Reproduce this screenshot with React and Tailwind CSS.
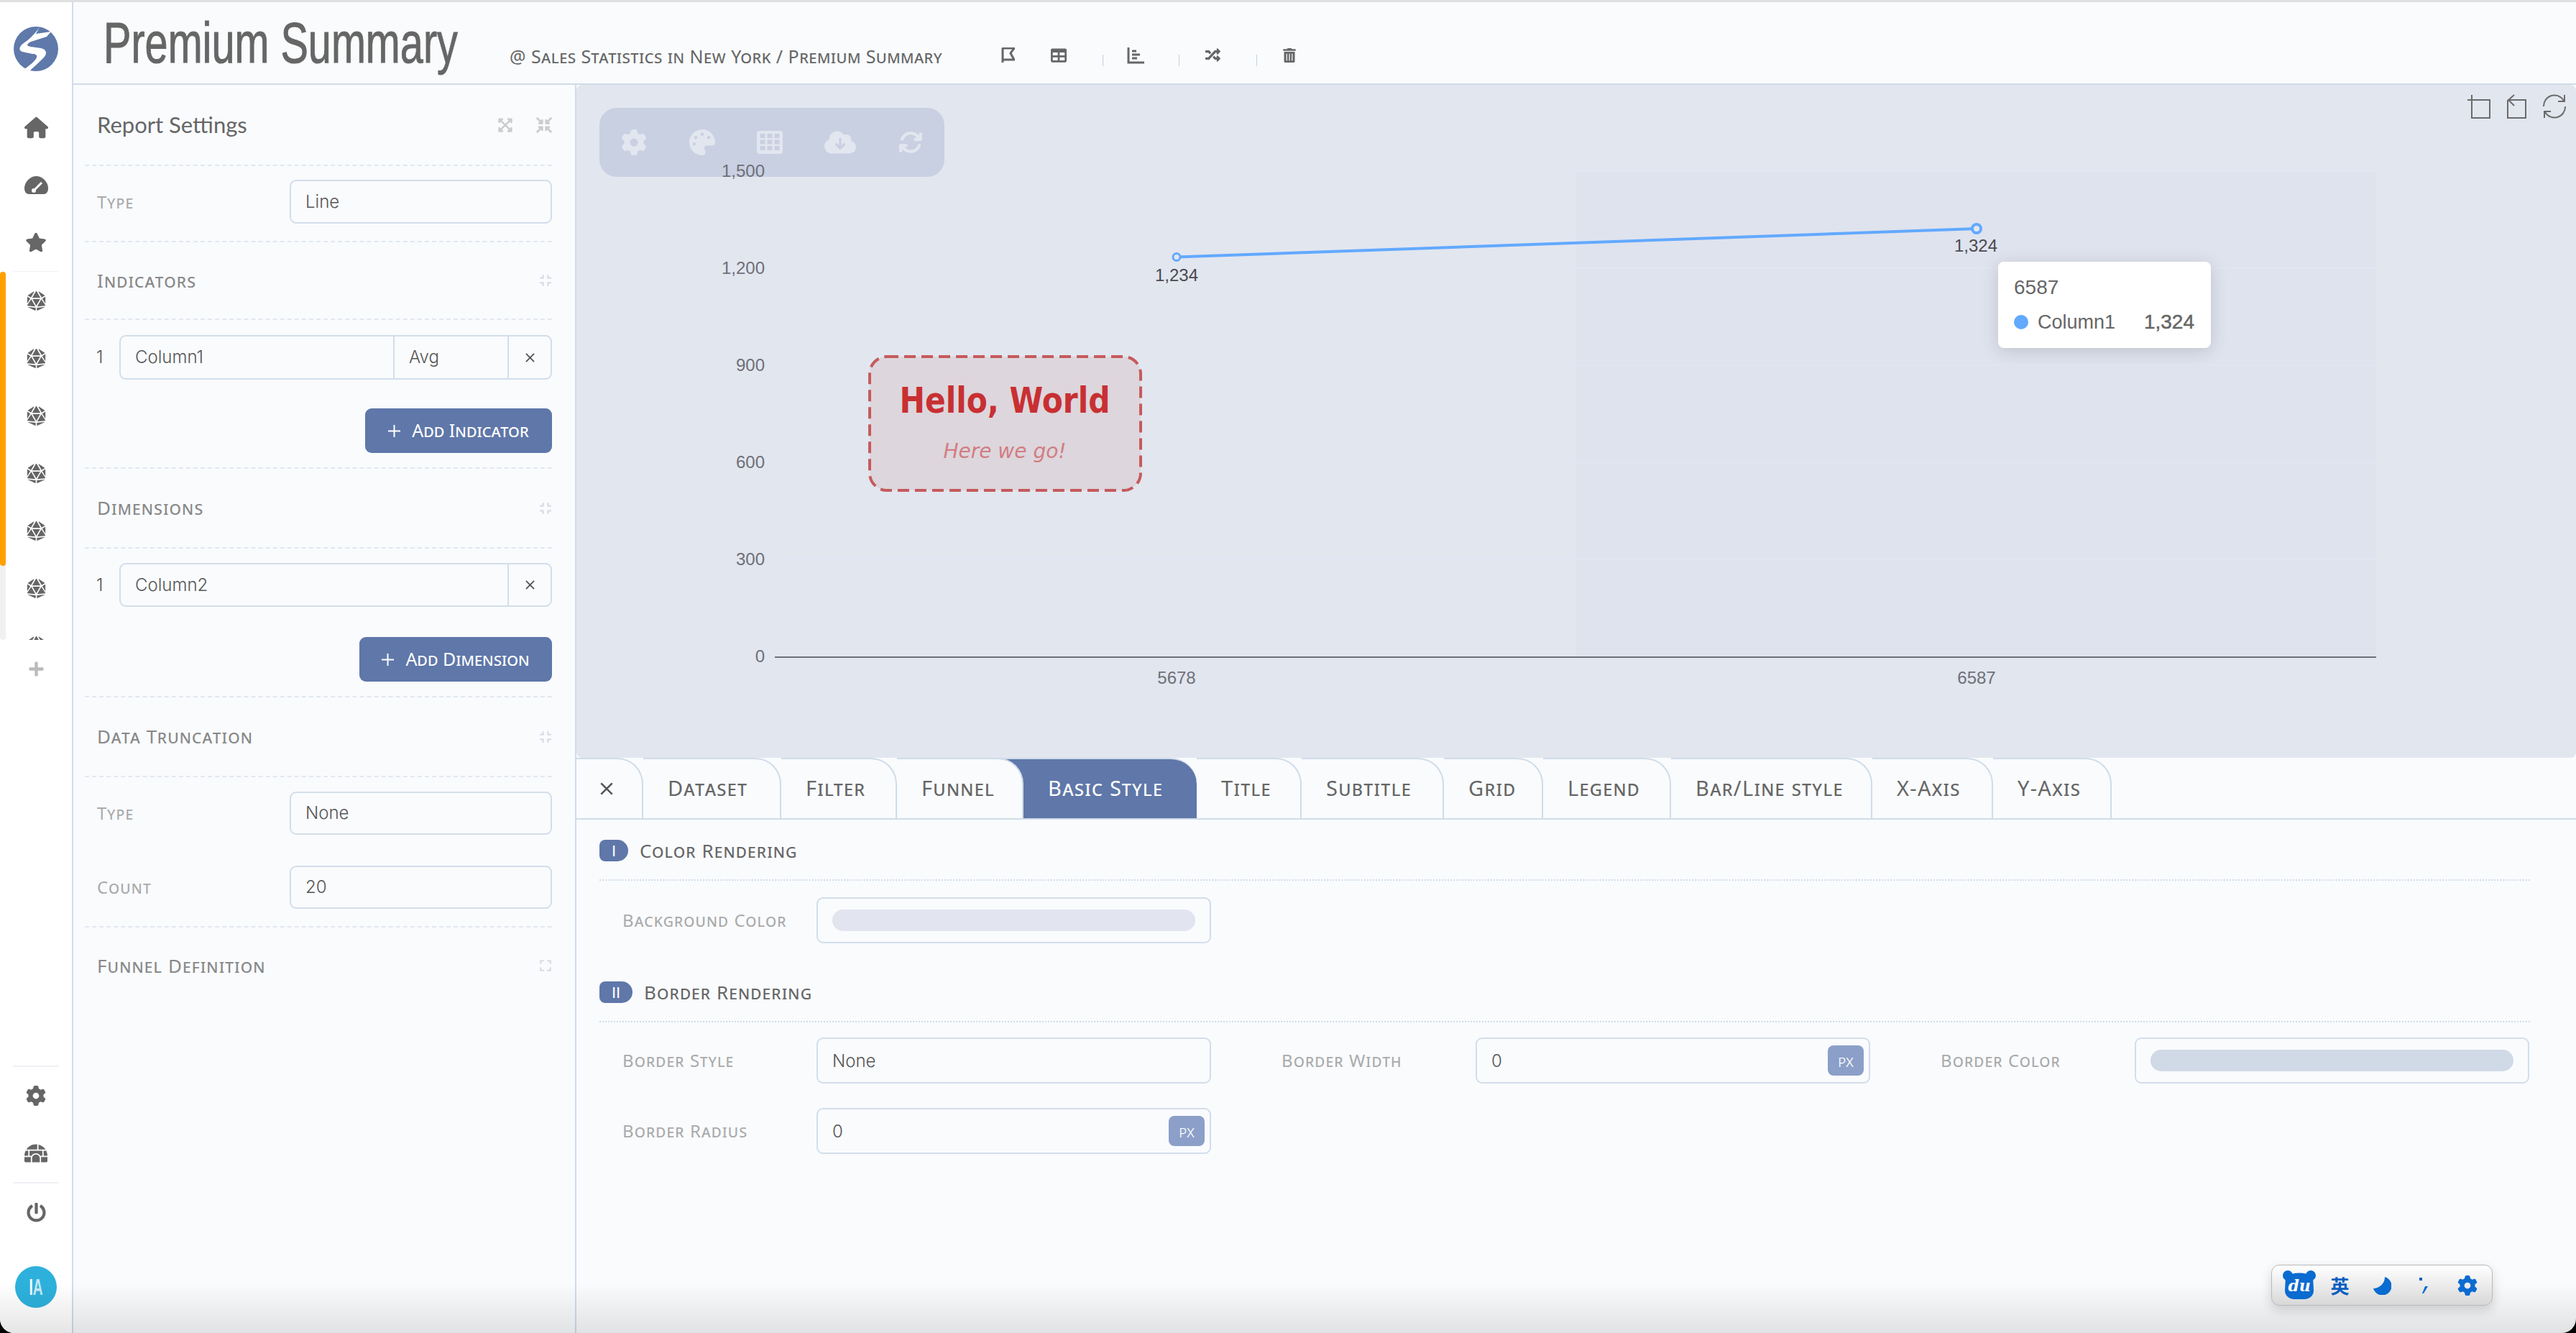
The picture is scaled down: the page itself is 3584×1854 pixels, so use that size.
import React from "react";
import {
  FaDiceD20, FaPlus, FaIgloo, FaPowerOff,
  FaExpandArrowsAlt, FaCompressArrowsAlt, FaCompress, FaExpand,
  FaTable, FaRandom, FaTrashAlt,
} from "react-icons/fa";
import { FaHouse, FaStar, FaGear, FaPalette, FaCloudArrowDown, FaArrowsRotate } from "react-icons/fa6";

const SC = "[font-variant-caps:small-caps] font-['Noto_Sans',sans-serif]";
const BODY = "font-['Inter',sans-serif]";

function X({ size = 14, w = 2.5 }) {
  return (
    <svg width={size} height={size} viewBox="0 0 14 14">
      <path d="M1 1 L13 13 M13 1 L1 13" stroke="#555555" strokeWidth={w} fill="none" />
    </svg>
  );
}

function NavItem({ children, className = "" }) {
  return <div className={`h-[80px] flex items-center justify-center text-[#666666] shrink-0 ${className}`}>{children}</div>;
}

function Sidebar() {
  return (
    <div className="w-[102px] shrink-0 border-r-2 border-[#d0dce8] bg-white flex flex-col">
      <div className="h-[134px] flex justify-center pt-[34px] shrink-0">
        <svg width="62" height="62" viewBox="0 0 62 62">
          <circle cx="31" cy="31" r="31" fill="#5f79ab" />
          <path d="M36 1 L31 10 L52 7 L46 14 L24 21 C18 24 17 27 24 28 L38 30 C47 32 47 39 40 45 C35 50 28 56 22 62 L14 60 C22 54 30 48 32 43 C33 40 31 38 26 38 L12 35 C6 33 8 27 14 23 C20 19 28 12 36 1 Z" fill="#ffffff" />
        </svg>
      </div>
      <NavItem><FaHouse size={33} /></NavItem>
      <NavItem>
        <svg width="33" height="25" viewBox="0 0 33 25">
          <path d="M6 25 C2 25 0 21 0 17 C0 8 8 0 16.5 0 C25 0 33 8 33 17 C33 21 31 25 27 25 Z" fill="#666666" />
          <path d="M13 20 L24 9" stroke="#ffffff" strokeWidth="3" />
          <circle cx="13" cy="20" r="3" fill="#ffffff" />
        </svg>
      </NavItem>
      <NavItem><FaStar size={30} /></NavItem>
      <div className="mx-[18px] border-b border-[#eef0f5]" />
      <div className="relative h-[512px] overflow-hidden shrink-0">
        <div className="absolute left-0 top-0 w-[8px] h-full rounded-[4px] bg-[#f0f1f3]" />
        <div className="absolute left-0 top-0 w-[8px] h-[409px] rounded-[4px] bg-[#ff9f00]" />
        {[0, 1, 2, 3, 4, 5, 6].map((i) => (
          <NavItem key={i}><FaDiceD20 size={27} /></NavItem>
        ))}
      </div>
      <div className="h-[80px] flex items-center justify-center text-[#bbbbbb] shrink-0"><FaPlus size={23} /></div>
      <div className="mt-auto mx-[18px] border-b-2 border-[#eef0f5]" />
      <NavItem><FaGear size={28} /></NavItem>
      <NavItem><FaIgloo size={32} /></NavItem>
      <div className="mx-[18px] border-b-2 border-[#eef0f5]" />
      <NavItem className="mb-[24px]"><FaPowerOff size={27} /></NavItem>
      <div className="h-[80px] mb-[24px] flex items-center justify-center shrink-0">
        <div className="w-[58px] h-[58px] rounded-full bg-[#2db1dc] flex items-center justify-center font-['Liberation_Sans',sans-serif] font-bold text-[32px] leading-none">
          <span className="scale-x-[0.6] flex">
            <span className="text-white">I</span>
            <span className="text-[#c5e8f6]">A</span>
          </span>
        </div>
      </div>
    </div>
  );
}

function Header() {
  return (
    <div className="h-[115px] shrink-0 border-b-2 border-[#d0dce8] flex items-center pl-[42px] relative">
      <div className="w-[565px] shrink-0 h-full flex items-center">
        <span className="inline-block origin-left scale-x-[0.72] font-['Liberation_Sans',sans-serif] [-webkit-text-stroke:1px_#666666] text-[#666666] text-[80px] leading-none whitespace-nowrap">Premium Summary</span>
      </div>
      <div className={`w-[683px] shrink-0 pt-[38px] ${SC} text-[25px] tracking-[0.45px] text-[#666666] whitespace-nowrap`}>@ Sales Statistics in New York / Premium Summary</div>
      <div className="flex items-center text-[#666666] pt-[34px]">
        <svg width="20" height="22" viewBox="0 0 20 22"><path d="M2 1 H19 L14 8 L19 17 H4 M3 1 V21" fill="none" stroke="#666666" strokeWidth="3" /></svg>
        <FaTable size={22} className="ml-[50px]" />
        <div className="ml-[50px] w-[1px] h-[16px] mt-[14px] bg-[#c5d0dd]" />
        <svg width="24" height="24" viewBox="0 0 24 24" className="ml-[33px]"><path d="M2 1 V22 H24 M7 6 H13 M7 11 H18 M7 16 H14" fill="none" stroke="#666666" strokeWidth="3" /></svg>
        <div className="ml-[48px] w-[1px] h-[16px] mt-[14px] bg-[#c5d0dd]" />
        <FaRandom size={21} className="ml-[36px]" />
        <div className="ml-[50px] w-[1px] h-[16px] mt-[14px] bg-[#c5d0dd]" />
        <FaTrashAlt size={20} className="ml-[35px]" />
      </div>
    </div>
  );
}

function SectionTitle({ title, expand, className = "" }) {
  return (
    <div className={`flex items-center justify-between pl-[17px] ${className}`}>
      <span className={`${SC} text-[26px] tracking-[1.1px] text-[#888888]`}>{title}</span>
      {expand ? <FaExpand size={18} className="text-[#d8dde5]" /> : <FaCompress size={18} className="text-[#d8dde5]" />}
    </div>
  );
}

function LabeledInput({ label, value, className = "" }) {
  return (
    <div className={`flex items-center ${className}`}>
      <span className={`w-[285px] pl-[17px] shrink-0 ${SC} text-[24px] tracking-[1.2px] text-[#aaaaaa]`}>{label}</span>
      <div className={`flex-1 h-full border-2 border-[#d3deea] rounded-[9px] flex items-center pl-[20px] ${BODY} text-[24px] font-light text-[#555555]`}>{value}</div>
    </div>
  );
}

function AddButton({ label, width, className = "" }) {
  return (
    <div className={`ml-auto h-[62px] rounded-[9px] bg-[#5f77a9] text-white flex items-center justify-center gap-[16px] ${width} ${className}`}>
      <svg width="17" height="17" viewBox="0 0 17 17"><path d="M8.5 0 V17 M0 8.5 H17" stroke="#ffffff" strokeWidth="2" /></svg>
      <span className={`${SC} text-[25px]`}>{label}</span>
    </div>
  );
}

function Cell({ children, className = "" }) {
  return <div className={`flex items-center pl-[20px] ${BODY} text-[24px] font-light text-[#555555] ${className}`}>{children}</div>;
}

function XCell() {
  return <div className="w-[60px] flex items-center justify-center border-l-2 border-[#d3deea] shrink-0"><X size={13} w={2} /></div>;
}

function Panel() {
  return (
    <div className="w-[700px] shrink-0 border-r-2 border-[#d0dce8] pl-[16px] pr-[32px] overflow-hidden">
      <div className="h-[113px] flex items-center justify-between pl-[17px] border-b-2 border-dashed border-[#e2e8f0]">
        <span className="font-['Lato',sans-serif] text-[31px] text-[#666666]">Report Settings</span>
        <div className="flex items-center gap-[32px] text-[#cccccc]">
          <FaExpandArrowsAlt size={22} />
          <FaCompressArrowsAlt size={22} />
        </div>
      </div>
      <LabeledInput label="Type" value="Line" className="h-[61px] mt-[19px]" />
      <div className="mt-[24px] border-b-2 border-dashed border-[#e2e8f0]" />
      <SectionTitle title="Indicators" className="h-[106px]" />
      <div className="border-b-2 border-dashed border-[#e2e8f0]" />
      <div className="flex items-center h-[62px] mt-[21px]">
        <span className={`w-[48px] pl-[16px] shrink-0 ${BODY} text-[24px] font-light text-[#555555]`}>1</span>
        <div className="flex-1 h-full flex border-2 border-[#d3deea] rounded-[9px]">
          <Cell className="w-[379px] shrink-0">Column1</Cell>
          <Cell className="flex-1 border-l-2 border-[#d3deea]">Avg</Cell>
          <XCell />
        </div>
      </div>
      <AddButton label="Add Indicator" width="w-[260px]" className="mt-[40px]" />
      <div className="mt-[20px] border-b-2 border-dashed border-[#e2e8f0]" />
      <SectionTitle title="Dimensions" className="h-[109px]" />
      <div className="border-b-2 border-dashed border-[#e2e8f0]" />
      <div className="flex items-center h-[61px] mt-[20px]">
        <span className={`w-[48px] pl-[16px] shrink-0 ${BODY} text-[24px] font-light text-[#555555]`}>1</span>
        <div className="flex-1 h-full flex border-2 border-[#d3deea] rounded-[9px]">
          <Cell className="flex-1">Column2</Cell>
          <XCell />
        </div>
      </div>
      <AddButton label="Add Dimension" width="w-[268px]" className="mt-[42px]" />
      <div className="mt-[20px] border-b-2 border-dashed border-[#e2e8f0]" />
      <SectionTitle title="Data Truncation" className="h-[109px]" />
      <div className="border-b-2 border-dashed border-[#e2e8f0]" />
      <LabeledInput label="Type" value="None" className="h-[60px] mt-[20px]" />
      <LabeledInput label="Count" value="20" className="h-[60px] mt-[43px]" />
      <div className="mt-[24px] border-b-2 border-dashed border-[#e2e8f0]" />
      <SectionTitle title="Funnel Definition" expand className="h-[106px]" />
    </div>
  );
}

function Chart() {
  const yTicks = [[1200, "1,200"], [900, "900"], [600, "600"], [300, "300"], [0, "0"]];
  const y = (v) => 913 - v * 0.45;
  return (
    <div className="relative h-[936px] shrink-0 bg-[#e2e6ef] rounded-[8px] overflow-hidden">
      <svg className="block" width="2782" height="936" viewBox="802 118 2782 936" fontFamily="'Liberation Sans', sans-serif">
        <rect x="2192" y="238" width="1114" height="675" fill="#dfe3ee" />
        {[1500, 1200, 900, 600, 300].map((v) => (
          <line key={v} x1="1078" x2="3306" y1={y(v)} y2={y(v)} stroke="#e0e6f1" strokeWidth="2" />
        ))}
        <line x1="1078" x2="3306" y1="914" y2="914" stroke="#6e7079" strokeWidth="2" />
        {yTicks.map(([v, t]) => (
          <text key={v} x="1064" y={y(v) + 8} textAnchor="end" fontSize="24" fill="#6e7079">{t}</text>
        ))}
        <text x="1637" y="951" textAnchor="middle" fontSize="24" fill="#6e7079">5678</text>
        <text x="2750" y="951" textAnchor="middle" fontSize="24" fill="#6e7079">6587</text>
        <line x1="1637" y1="357.5" x2="2750" y2="318" stroke="#62a9ff" strokeWidth="4" />
        <circle cx="1637" cy="357.5" r="5" fill="#e2e6ef" stroke="#62a9ff" strokeWidth="3" />
        <circle cx="2750" cy="318" r="6" fill="#e2e6ef" stroke="#62a9ff" strokeWidth="4" />
        <text x="1637" y="391" textAnchor="middle" fontSize="24" fill="#4a4a4f">1,234</text>
        <text x="2749" y="350" textAnchor="middle" fontSize="24" fill="#4a4a4f">1,324</text>
        <rect x="1210" y="496" width="377" height="186" rx="24" fill="#ddd6dc" stroke="#c55a5c" strokeWidth="4" strokeDasharray="16 8" />
        <text x="1398" y="574" textAnchor="middle" fontSize="49" fontWeight="700" textLength="293" lengthAdjust="spacingAndGlyphs" fontFamily="'DejaVu Sans', sans-serif" fill="#c83032">Hello, World</text>
        <text x="1398" y="637" textAnchor="middle" fontSize="28" fontStyle="italic" fontFamily="'DejaVu Sans', sans-serif" fill="#d17d82">Here we go!</text>
        <g fill="none" stroke="#6b6b6b" strokeWidth="2">
          <path d="M3433 139 H3447 M3439 132 V164 H3464 V139 H3447" />
          <path d="M3489 139 V164 H3514 V139 H3490 M3498 132 L3490 139 L3498 147" />
          <path d="M3539 148 A15 15 0 0 1 3567 140 M3569 148 A15 15 0 0 1 3541 156 M3568 132 V141 H3559 M3540 164 V155 H3549" />
        </g>
      </svg>
      <div className="absolute left-[32px] top-[32px] w-[480px] h-[96px] rounded-[24px] bg-[#c9d0e2] text-[#e2e6ef]">
        <div className="flex h-full items-center justify-around px-[1px]">
          <FaGear size={36} />
          <FaPalette size={36} />
          <svg width="36" height="32" viewBox="0 0 36 32">
            <rect width="36" height="32" rx="4" fill="#e2e6ef" />
            {[4.5, 14.5, 24.5].map((x) => [4, 12.5, 21].map((yy) => (
              <rect key={`${x}-${yy}`} x={x} y={yy} width="7" height="6" fill="#c9d0e2" />
            )))}
          </svg>
          <FaCloudArrowDown size={44} />
          <FaArrowsRotate size={34} />
        </div>
        <span className="absolute left-[170px] top-[68px] font-['Liberation_Sans',sans-serif] text-[24px] leading-[40px] text-[#6e7079]">1,500</span>
      </div>
      <div className="absolute left-[1978px] top-[246px] w-[296px] h-[120px] bg-white rounded-[8px] shadow-[0_4px_24px_rgba(0,0,0,0.15)] pl-[22px] pr-[23px] font-['Liberation_Sans',sans-serif] text-[#666666] text-[28px]">
        <div className="h-[30px] mt-[21px] flex items-center">6587</div>
        <div className="mt-[18px] h-[30px] flex items-center">
          <span className="w-[20px] h-[20px] rounded-full bg-[#62a9ff] mr-[13px]" />
          <span className="text-[27px]">Column1</span>
          <span className="ml-auto font-medium [-webkit-text-stroke:0.5px_#666666]">1,324</span>
        </div>
      </div>
    </div>
  );
}

const TABS = [
  ["Dataset", "w-[192px]"], ["Filter", "w-[161px]"], ["Funnel", "w-[176px]"],
  ["Basic Style", "w-[241px]"], ["Title", "w-[146px]"], ["Subtitle", "w-[198px]"],
  ["Grid", "w-[138px]"], ["Legend", "w-[178px]"], ["Bar/Line style", "w-[280px]"],
  ["X-Axis", "w-[168px]"], ["Y-Axis", "w-[165px]"],
];

function Tabs() {
  return (
    <div className="h-[86px] shrink-0 flex border-b-2 border-[#d0dce8]">
      <div className="relative z-10 w-[93px] shrink-0 flex items-center pl-[33px] border-t-2 border-r-2 border-[#d0dce8] rounded-tr-[36px] bg-[#f9fbfd]">
        <X size={18} w={2} />
      </div>
      {TABS.map(([t, w]) => {
        const active = t === "Basic Style";
        if (active) {
          return (
            <div key={t} className={`${w} shrink-0 -ml-[36px] box-content pl-[36px] flex items-center bg-[#5f77a9] rounded-tr-[36px] border-t-2 border-[#d0dce8]`}>
              <span className={`pl-[34px] ${SC} text-[29px] tracking-[1.3px] text-white whitespace-nowrap pb-[2px]`}>{t}</span>
            </div>
          );
        }
        return (
          <div key={t} className={`${w} shrink-0 flex items-center border-t-2 border-r-2 border-[#d0dce8] rounded-tr-[36px] ${t === "Funnel" ? "relative z-10 bg-[#f9fbfd]" : ""}`}>
            <span className={`pl-[34px] ${SC} text-[29px] tracking-[1.3px] text-[#666666] whitespace-nowrap pb-[2px]`}>{t}</span>
          </div>
        );
      })}
    </div>
  );
}

function SectionHead({ num, title, badgeW, className = "" }) {
  return (
    <div className={`flex items-start gap-[16px] h-[57px] border-b-2 border-dotted border-[#d0dce8] ${className}`}>
      <span className={`${badgeW} h-[30px] rounded-l-[8px] rounded-r-[15px] bg-[#5f77a9] text-white flex items-center justify-center font-['Liberation_Sans',sans-serif] text-[22px]`}>{num}</span>
      <span className={`${SC} text-[26px] leading-[30px] tracking-[1.1px] text-[#666666]`}>{title}</span>
    </div>
  );
}

function Field({ label, value, px, pill }) {
  return (
    <div className="flex items-center w-[851px] h-[64px]">
      <span className={`w-[302px] pl-[32px] shrink-0 ${SC} text-[24px] tracking-[1.1px] text-[#aaaaaa] whitespace-nowrap`}>{label}</span>
      <div className={`relative w-[549px] h-full shrink-0 border-2 border-[#d3deea] rounded-[9px] flex items-center ${BODY} text-[24px] font-light text-[#555555]`}>
        {pill ? <div className={`mx-[20px] h-[30px] flex-1 rounded-[15px] ${pill}`} /> : <span className="pl-[20px] pt-[2px]">{value}</span>}
        {px && <span className={`absolute right-[7px] top-[9px] w-[50px] h-[42px] rounded-[8px] bg-[#8c9fc8] text-white flex items-center justify-center ${SC} text-[23px]`}>px</span>}
      </div>
    </div>
  );
}

function Content() {
  return (
    <div className="pl-[32px] pr-[64px] pt-[28px]">
      <SectionHead num="I" title="Color Rendering" badgeW="w-[40px]" />
      <div className="mt-[23px]"><Field label="Background Color" pill="bg-[#e2e5ef]" /></div>
      <SectionHead num="II" title="Border Rendering" badgeW="w-[46px]" className="mt-[53px]" />
      <div className="mt-[21px] flex gap-[66px]">
        <Field label="Border Style" value="None" />
        <Field label="Border Width" value="0" px />
        <Field label="Border Color" pill="bg-[#d0d9e6]" />
      </div>
      <div className="mt-[34px]"><Field label="Border Radius" value="0" px /></div>
    </div>
  );
}

function Ime() {
  return (
    <div className="absolute left-[3160px] top-[1759px] w-[308px] h-[57px] rounded-[11px] border border-[#b9b9b9] bg-linear-to-b from-white to-[#d8d8d8] shadow-[0_6px_16px_rgba(0,0,0,0.15)] flex items-center text-[#0a6bd0]">
      <div className="w-[74px] flex justify-center pl-[4px]">
        <div className="relative w-[46px] h-[42px]">
          <svg width="46" height="42" viewBox="0 0 46 42" className="absolute inset-0">
            <circle cx="7" cy="7" r="7" fill="#0a6bd0" />
            <circle cx="39" cy="7" r="7" fill="#0a6bd0" />
            <path d="M4 8 C14 2 32 2 42 8 L43 28 C43 36 36 40 30 40 H16 C10 40 3 36 3 28 Z" fill="#0a6bd0" />
          </svg>
          <span className="absolute left-0 right-0 top-[8px] text-center font-['DejaVu_Serif',serif] italic font-bold text-[22px] leading-[26px] text-white">du</span>
        </div>
      </div>
      <span className="w-[46px] text-center font-['Noto_Sans_CJK_SC',sans-serif] font-bold text-[26px] leading-none text-[#0a5fc0]">英</span>
      <div className="w-[74px] flex justify-center">
        <svg width="26" height="26" viewBox="0 0 26 26"><path d="M17 1 A13 13 0 1 1 1 17 A16 16 0 0 0 17 1 Z" fill="#0a6bd0" /></svg>
      </div>
      <div className="w-[46px] flex justify-center">
        <svg width="14" height="24" viewBox="0 0 14 24"><rect x="1" y="1" width="4" height="4" fill="#0a5fc0" /><path d="M9 13 H13 L7 23 H5 Z" fill="#0a6bd0" /></svg>
      </div>
      <div className="w-[74px] flex justify-center pl-[4px]"><FaGear size={28} /></div>
    </div>
  );
}

export default function App() {
  return (
    <div className="relative w-[3584px] h-[1854px] bg-black overflow-hidden">
      <div className="h-full flex rounded-b-[20px] overflow-hidden bg-[#f9fbfd] border-t-[3px] border-[#e0e0e0]">
        <Sidebar />
        <div className="flex-1 min-w-0 flex flex-col">
          <Header />
          <div className="flex-1 flex min-h-0">
            <Panel />
            <div className="flex-1 min-w-0 flex flex-col">
              <Chart />
              <Tabs />
              <Content />
            </div>
          </div>
        </div>
      </div>
      <div className="absolute left-0 right-0 bottom-0 h-[70px] pointer-events-none bg-linear-to-b from-transparent to-black/10 rounded-b-[20px]" />
      <Ime />
    </div>
  );
}
